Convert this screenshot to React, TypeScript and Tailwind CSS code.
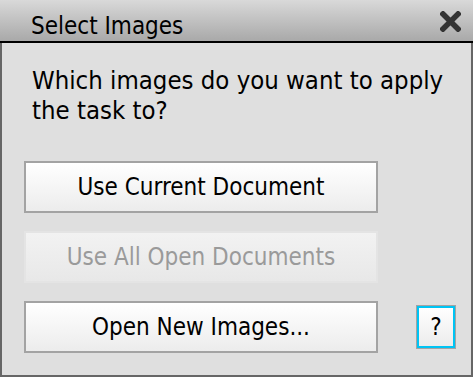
export default function App() {
  const btn =
    "flex h-[52px] w-[354px] items-center justify-center border-2 text-[24px] leading-none";
  return (
    <div className="flex h-[377px] w-[473px] flex-col bg-[#dfdfdf] font-['DejaVu_Sans_Condensed','DejaVu_Sans',sans-serif] text-black">
      {/* title bar */}
      <div className="flex h-[43px] shrink-0 items-center justify-between border-b-2 border-black bg-gradient-to-b from-[#d9d9d9] to-[#a9a9a9] pl-[31px] pr-[12px]">
        <span className="pt-[11px] text-[24px] leading-none">Select Images</span>
        <svg width="21" height="21" viewBox="0 0 21 21" className="mt-[2px]">
          <path d="M3 3 L18 18 M18 3 L3 18" stroke="#333" strokeWidth="5.5" strokeLinecap="square" />
        </svg>
      </div>

      {/* body */}
      <div className="flex flex-1 flex-col border-x-2 border-b-2 border-[#666] pl-[22px] pr-[15px]">
        <p className="mt-[22px] pl-[8px] text-[25.5px] leading-[30px]">
          Which images do you want to apply
          <br />
          the task to?
        </p>

        <div className="mt-[36px] flex flex-col gap-[18px]">
          <button className={`${btn} border-[#a3a3a3] bg-gradient-to-b from-white to-[#ececec]`}>
            Use Current Document
          </button>
          <button
            disabled
            className={`${btn} border-[#e4e4e4] bg-gradient-to-b from-[#f2f2f2] to-[#e8e8e8] text-[#9a9a9a]`}
          >
            Use All Open Documents
          </button>
          <div className="flex items-center">
            <button className={`${btn} border-[#a3a3a3] bg-gradient-to-b from-white to-[#ececec]`}>
              Open New Images...
            </button>
            <button className="ml-[38px] flex h-[44px] w-[40px] items-center justify-center border border-[#a3a3a3] bg-[#f4f4f4]">
              <span className="flex h-full w-full items-center justify-center border-2 border-[#00c4f4] bg-gradient-to-b from-white to-[#ececec] text-[24px] leading-none">
                ?
              </span>
            </button>
          </div>
        </div>
      </div>
    </div>
  );
}
